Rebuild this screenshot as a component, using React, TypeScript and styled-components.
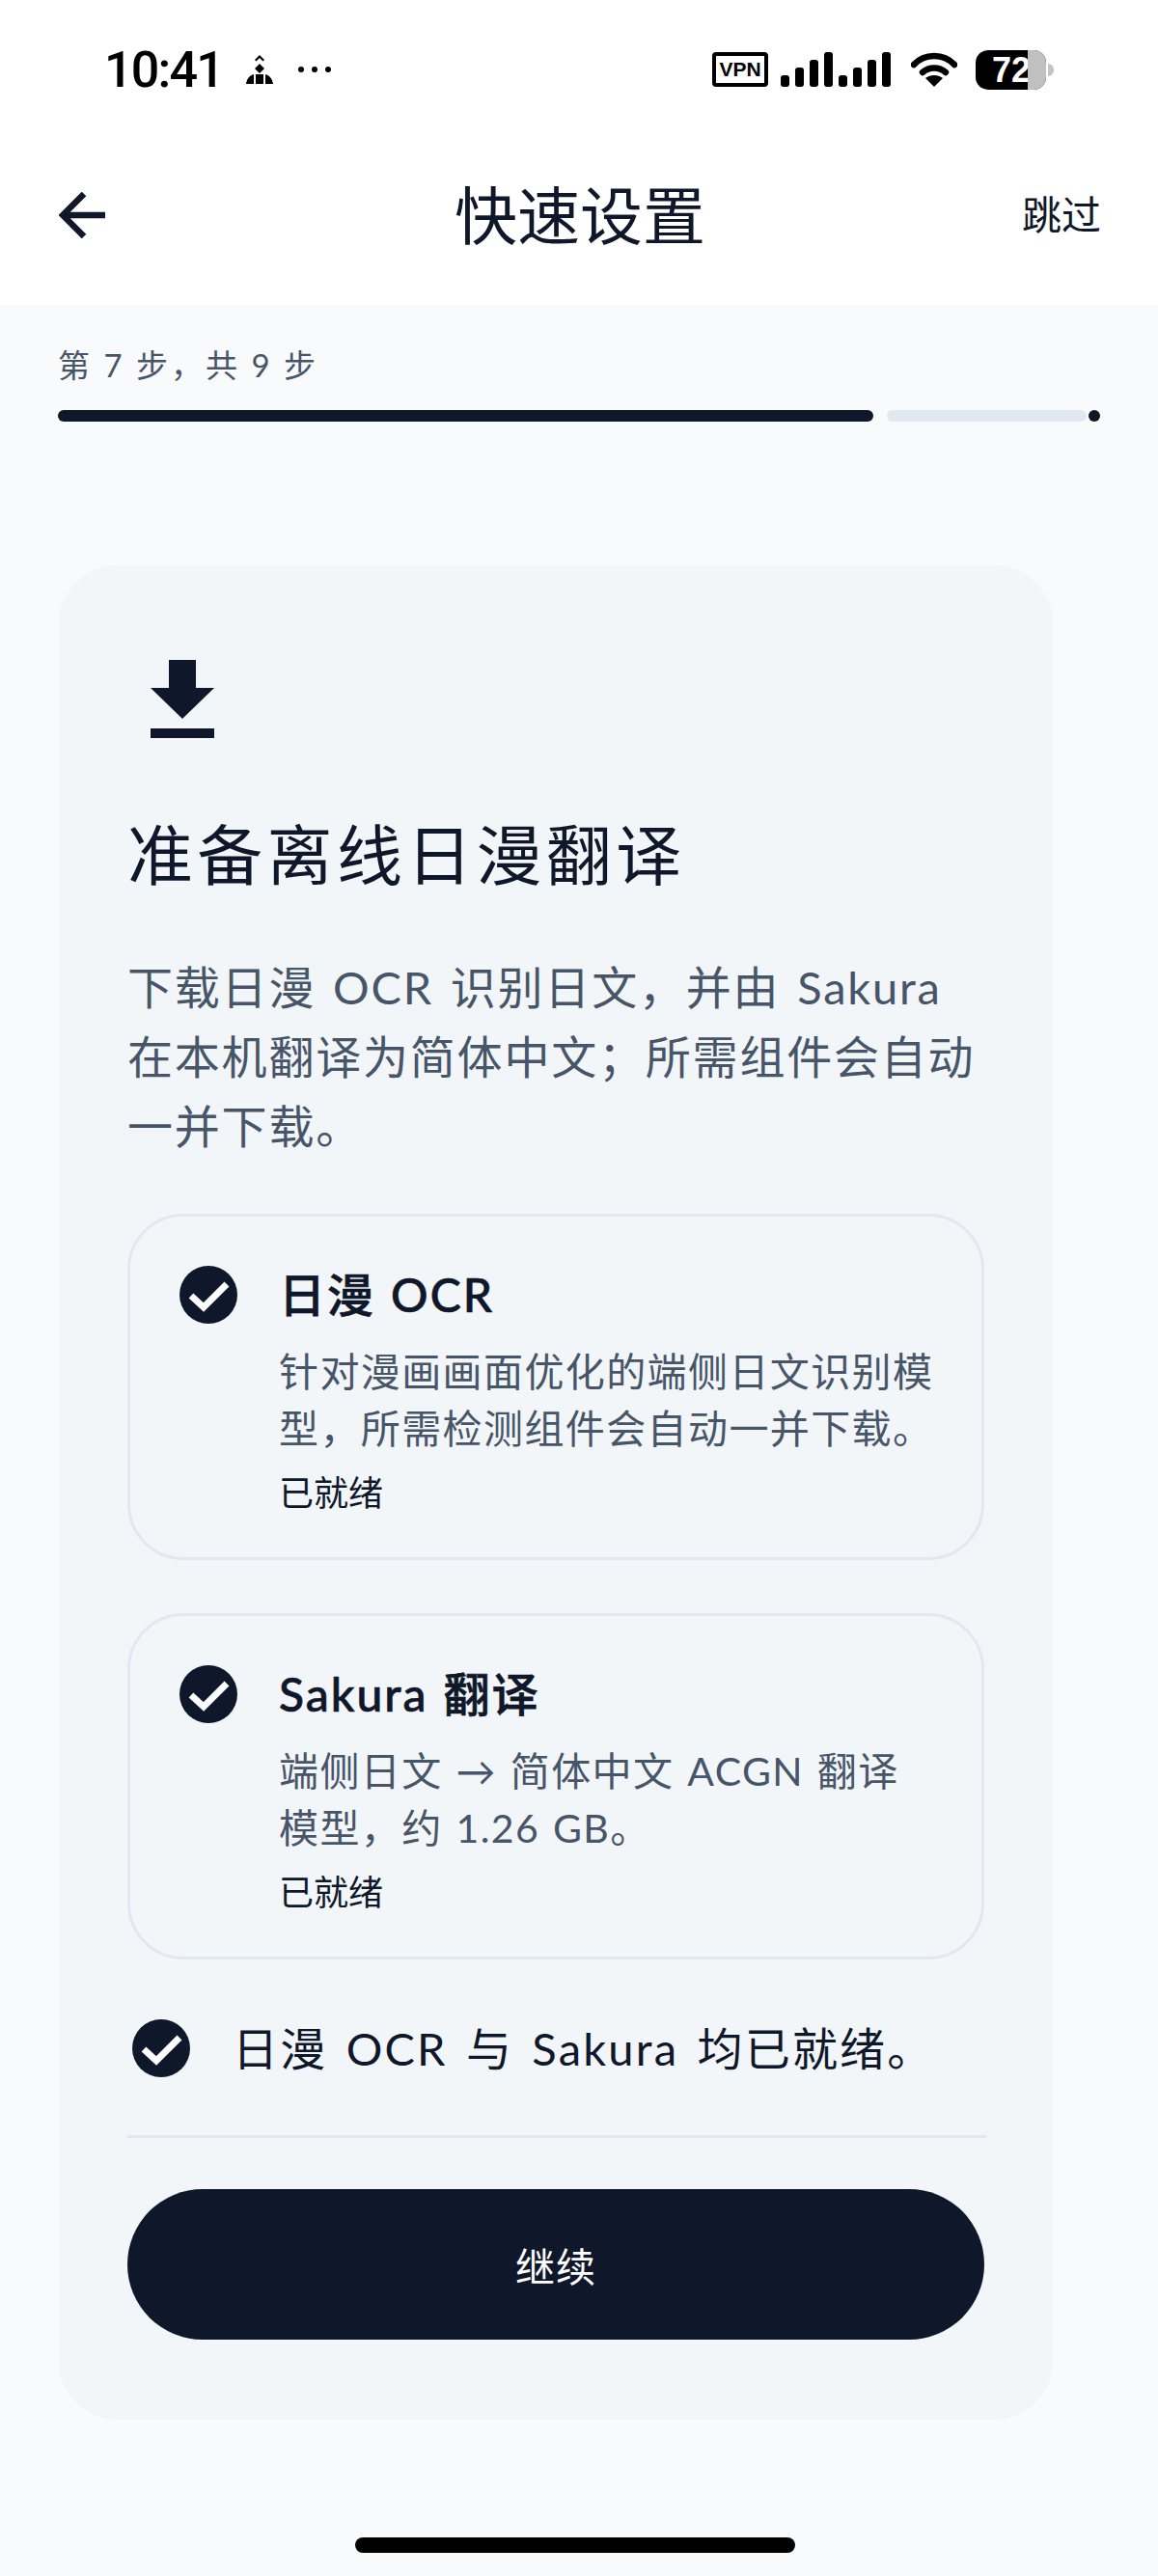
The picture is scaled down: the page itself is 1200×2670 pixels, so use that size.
import styled, { createGlobalStyle } from "styled-components";

const GlobalStyle = createGlobalStyle`
  html, body {
    margin: 0;
    padding: 0;
    background: #f8fafc;
  }
`;

const FONT = `"Lato", "Noto Sans CJK SC", sans-serif`;

const items = [
  {
    title: "日漫 OCR",
    lines: ["针对漫画画面优化的端侧日文识别模", "型，所需检测组件会自动一并下载。"],
  },
  {
    title: "Sakura 翻译",
    lines: ["端侧日文 → 简体中文 ACGN 翻译", "模型，约 1.26 GB。"],
  },
];

function CheckIcon() {
  return (
    <CheckSvg viewBox="0 0 60 60">
      <circle cx="30" cy="30" r="30" fill="#0f172a" />
      <path d="M12 31l13 12 24-24" fill="none" stroke="#ffffff" strokeWidth="7" />
    </CheckSvg>
  );
}

export default function App() {
  return (
    <Page>
      <GlobalStyle />
      <Top>
        <StatusBar>
          <Time>10:41</Time>
          <PersonSvg viewBox="0 0 28 30">
            <path d="M14 9l5 5-5 5-5-5zM9 5l5-5 5 5-1.500 1.500L14 3l-3.500 3.500zM0 30C1 24 4 21 8 20v10zM10 20h8v10h-8zM20 20c4 1 7 4 8 10h-8z" fill="#000" />
          </PersonSvg>
          <Dots>
            <i />
            <i />
            <i />
          </Dots>
          <StatusRight>
            <VpnBox>VPN</VpnBox>
            <SignalSvg viewBox="0 0 114 36">
              <rect x="0" y="24" width="9" height="12" rx="3" />
              <rect x="15" y="16" width="9" height="20" rx="3" />
              <rect x="30" y="8" width="9" height="28" rx="3" />
              <rect x="45" y="0" width="9" height="36" rx="3" />
              <rect x="60" y="24" width="9" height="12" rx="3" />
              <rect x="75" y="16" width="9" height="20" rx="3" />
              <rect x="90" y="8" width="9" height="28" rx="3" />
              <rect x="105" y="0" width="9" height="36" rx="3" />
            </SignalSvg>
            <WifiSvg viewBox="0 0 48 36">
              <path d="M3 13C14 1 34 1 45 13" fill="none" stroke="#000" strokeWidth="6.500" strokeLinecap="round" />
              <path d="M12 21c7-6 17-6 24 0" fill="none" stroke="#000" strokeWidth="6.500" strokeLinecap="round" />
              <path d="M24 36l-9-9c5-4 13-4 18 0z" fill="#000" />
            </WifiSvg>
            <Battery>
              <BatteryLevel>72</BatteryLevel>
            </Battery>
          </StatusRight>
        </StatusBar>
        <Header>
          <BackIcon viewBox="0 0 48 48">
            <path d="M26 2L4 24l22 22M4 24h44" fill="none" stroke="#0f172a" strokeWidth="6.500" />
          </BackIcon>
          <HeaderTitle>快速设置</HeaderTitle>
          <Skip>跳过</Skip>
        </Header>
      </Top>

      <Steps>
        <StepLabel>第 7 步，共 9 步</StepLabel>
        <Progress>
          <ProgressDone />
          <ProgressRest />
          <ProgressDot />
        </Progress>
      </Steps>

      <Card>
        <DownloadIcon viewBox="0 0 66 81">
          <path d="M19 0h28v29h19L33 61 0 29h19zM0 71h66v10H0z" fill="#0f172a" />
        </DownloadIcon>
        <Title>准备离线日漫翻译</Title>
        <Description>
          <span>下载日漫 OCR 识别日文，并由 Sakura</span>
          <span>在本机翻译为简体中文；所需组件会自动</span>
          <span>一并下载。</span>
        </Description>
        <ItemList>
          {items.map((item) => (
            <Item key={item.title}>
              <CheckIcon />
              <ItemBody>
                <ItemTitle>{item.title}</ItemTitle>
                {item.lines.map((line) => (
                  <ItemLine key={line}>{line}</ItemLine>
                ))}
                <ItemStatus>已就绪</ItemStatus>
              </ItemBody>
            </Item>
          ))}
        </ItemList>
        <Result>
          <CheckIcon />
          <ResultText>日漫 OCR 与 Sakura 均已就绪。</ResultText>
        </Result>
        <Divider />
        <ContinueButton>继续</ContinueButton>
      </Card>
      <HomeBar />
    </Page>
  );
}

const Page = styled.div`
  width: 1200px;
  height: 2670px;
  display: flex;
  flex-direction: column;
  overflow: hidden;
  background: #f8fafc;
  font-family: ${FONT};
  color: #0f172a;
`;

const Top = styled.div`
  height: 316px;
  background: #ffffff;
`;

const StatusBar = styled.div`
  height: 144px;
  box-sizing: border-box;
  padding: 0 116px 0 108px;
  display: flex;
  align-items: center;
  color: #000000;
`;

const Time = styled.span`
  font-family: "Roboto", sans-serif;
  font-size: 52px;
  font-weight: 500;
  letter-spacing: -1.800px;
  margin-right: 24px;
`;

const PersonSvg = styled.svg`
  width: 28px;
  height: 30px;
`;

const Dots = styled.div`
  display: flex;
  gap: 8px;
  margin-left: 26px;

  i {
    width: 6px;
    height: 6px;
    border-radius: 50%;
    background: #000000;
  }
`;

const StatusRight = styled.div`
  margin-left: auto;
  display: flex;
  align-items: center;
`;

const VpnBox = styled.div`
  width: 58px;
  height: 36px;
  box-sizing: border-box;
  border: 4px solid #000000;
  border-radius: 4px;
  font-family: "Liberation Sans", sans-serif;
  font-size: 21px;
  font-weight: 700;
  line-height: 28px;
  text-align: center;
`;

const SignalSvg = styled.svg`
  width: 114px;
  height: 36px;
  margin-left: 13px;
`;

const WifiSvg = styled.svg`
  width: 48px;
  height: 36px;
  margin-left: 21px;
`;

const Battery = styled.div`
  position: relative;
  width: 73px;
  height: 41px;
  margin-left: 19px;
  border-radius: 13px;
  background: #000000;

  &::before {
    content: "";
    position: absolute;
    z-index: 1;
    left: 54px;
    right: 0;
    top: 0;
    bottom: 0;
    border-radius: 0 13px 13px 0;
    background: #c0c0c0;
  }

  &::after {
    content: "";
    position: absolute;
    left: 75px;
    top: 14px;
    width: 6px;
    height: 13px;
    border-radius: 0 6px 6px 0;
    background: #c4c4c4;
  }
`;

const BatteryLevel = styled.span`
  position: absolute;
  left: 17px;
  top: 0;
  font-family: "Liberation Sans", sans-serif;
  font-size: 36px;
  font-weight: 700;
  line-height: 42px;
  color: #ffffff;
`;

const Header = styled.div`
  height: 158px;
  box-sizing: border-box;
  padding: 0 59px 0 61px;
  display: grid;
  grid-template-columns: 1fr auto 1fr;
  align-items: center;
`;

const BackIcon = styled.svg`
  width: 48px;
  height: 48px;
`;

const HeaderTitle = styled.h1`
  margin: 0;
  font-size: 65px;
  font-weight: 400;
  line-height: 92px;
`;

const Skip = styled.span`
  justify-self: end;
  font-size: 41px;
  line-height: 56px;
`;

const Steps = styled.div`
  padding: 0 60px;
`;

const StepLabel = styled.div`
  margin-top: 40px;
  font-size: 33px;
  line-height: 44px;
  letter-spacing: 3px;
  color: #475569;
`;

const Progress = styled.div`
  margin-top: 25px;
  height: 12px;
  display: flex;
  align-items: center;
  gap: 14px;
`;

const ProgressDone = styled.div`
  width: 845px;
  height: 12px;
  border-radius: 6px;
  background: #0f172a;
`;

const ProgressRest = styled.div`
  flex: 1;
  height: 12px;
  margin-right: -12px;
  border-radius: 6px;
  background: #e2e8f0;
`;

const ProgressDot = styled.div`
  width: 12px;
  height: 12px;
  border-radius: 50%;
  background: #0f172a;
`;

const Card = styled.section`
  width: 1030px;
  height: 1922px;
  box-sizing: border-box;
  margin: 149px 0 0 61px;
  padding: 98px 71px 0;
  border-radius: 60px;
  background: #f3f6f9;
`;

const DownloadIcon = styled.svg`
  display: block;
  width: 66px;
  height: 81px;
  margin-left: 24px;
`;

const Title = styled.h2`
  margin: 71px 0 0;
  font-size: 68px;
  font-weight: 400;
  line-height: 100px;
  letter-spacing: 4.300px;
`;

const Description = styled.div`
  margin-top: 51px;
  font-size: 47px;
  line-height: 72px;
  letter-spacing: 1.800px;
  word-spacing: 4px;
  color: #475569;

  span {
    display: block;
    white-space: nowrap;
  }
`;

const ItemList = styled.div`
  margin-top: 55px;
  display: flex;
  flex-direction: column;
  gap: 55px;
`;

const Item = styled.div`
  width: 888px;
  height: 359px;
  box-sizing: border-box;
  padding: 51px 0 0 51px;
  display: flex;
  gap: 43px;
  border: 3px solid #e2e8f0;
  border-radius: 58px;
`;

const CheckSvg = styled.svg`
  flex: none;
  width: 60px;
  height: 60px;
`;

const ItemBody = styled.div`
  padding-top: 1px;
`;

const ItemTitle = styled.div`
  font-size: 48px;
  font-weight: 500;
  line-height: 58px;
  letter-spacing: 2px;
  word-spacing: 2px;
  -webkit-text-stroke: 0.7px #0f172a;
`;

const ItemLine = styled.div`
  font-size: 41px;
  line-height: 59px;
  letter-spacing: 1.400px;
  word-spacing: 2px;
  color: #475569;
  white-space: nowrap;

  ${ItemTitle} + & {
    margin-top: 21px;
  }
`;

const ItemStatus = styled.div`
  margin-top: 12px;
  font-size: 36px;
  line-height: 50px;
`;

const Result = styled.div`
  margin-top: 62px;
  padding-left: 5px;
  display: flex;
  align-items: center;
  gap: 44px;
`;

const ResultText = styled.div`
  font-size: 47px;
  line-height: 60px;
  letter-spacing: 2.200px;
  word-spacing: 5px;
  white-space: nowrap;
`;

const Divider = styled.div`
  margin-top: 60px;
  width: 890px;
  height: 3px;
  background: #e2e8f0;
`;

const ContinueButton = styled.button`
  display: block;
  width: 888px;
  height: 156px;
  margin-top: 53px;
  border: 0;
  border-radius: 78px;
  background: #0f172a;
  color: #ffffff;
  font-family: ${FONT};
  font-size: 41px;
  letter-spacing: 1px;
`;

const HomeBar = styled.div`
  width: 456px;
  height: 16px;
  margin: 122px 0 0 368px;
  border-radius: 8px;
  background: #000000;
`;
